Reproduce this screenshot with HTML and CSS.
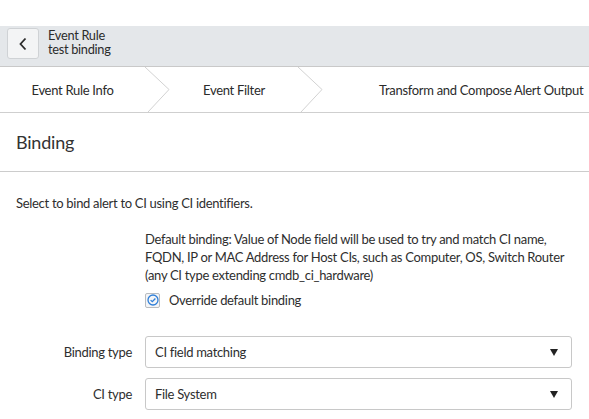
FILE: index.html
```html
<!DOCTYPE html>
<html>
<head>
<meta charset="utf-8">
<link rel="stylesheet" href="styles.css">
</head>
<body>
<div class="topspace"></div>
<header class="header">
  <button class="back" aria-label="Back">
    <svg width="10" height="14" viewBox="0 0 10 14"><path d="M7.5 1.5 L2.5 7 L7.5 12.5" fill="none" stroke="#2b2b2b" stroke-width="1.8"/></svg>
  </button>
  <div class="title">
    <div>Event Rule</div>
    <div>test binding</div>
  </div>
</header>
<nav class="tabs">
  <div class="tab tab1">Event Rule Info</div>
  <svg class="chev" width="25" height="45" viewBox="0 0 25 45"><path d="M0 0 L24 22.5 L3 45" fill="none" stroke="#d2d2d2" stroke-width="1"/></svg>
  <div class="tab tab2">Event Filter</div>
  <svg class="chev" width="25" height="45" viewBox="0 0 25 45"><path d="M0 0 L24 22.5 L3 45" fill="none" stroke="#d2d2d2" stroke-width="1"/></svg>
  <div class="tab tab3">Transform and Compose Alert Output</div>
</nav>
<section class="section-head">Binding</section>
<p class="intro">Select to bind alert to CI using CI identifiers.</p>
<div class="indent">
  <p class="desc">Default binding: Value of Node field will be used to try and match CI name, FQDN, IP or MAC Address for Host CIs, such as Computer, OS, Switch Router (any CI type extending cmdb_ci_hardware)</p>
  <label class="check">
    <span class="box"><svg width="12" height="12" viewBox="0 0 12 12"><circle cx="6" cy="6" r="5" fill="none" stroke="#2f7fd8" stroke-width="1.3"/><path d="M3.6 6.1 L5.3 7.7 L8.4 4.5" fill="none" stroke="#2f7fd8" stroke-width="1.3"/></svg></span>
    Override default binding
  </label>
</div>
<div class="form">
  <div class="row">
    <div class="label">Binding type</div>
    <div class="select"><span>CI field matching</span><span class="arrow"></span></div>
  </div>
  <div class="row">
    <div class="label">CI type</div>
    <div class="select"><span>File System</span><span class="arrow"></span></div>
  </div>
</div>
</body>
</html>
```
FILE: styles.css
```css
html, body {
  margin: 0;
  padding: 0;
  background: #fff;
}
body {
  font-family: "Lato", "Noto Sans", sans-serif;
  font-size: 13px;
  letter-spacing: -0.3px;
  color: #2e2e2e;
  width: 589px;
  overflow: hidden;
}
.topspace {
  height: 26px;
}
.header {
  height: 38px;
  padding-top: 2px;
  background: #e4e7ea;
  border-bottom: 1px solid #c9c9c9;
  display: flex;
  align-items: flex-start;
  padding-left: 7px;
}
.back {
  flex: none;
  width: 32px;
  height: 31px;
  box-sizing: border-box;
  border: 1px solid #cfd2d5;
  border-radius: 3px;
  background: #f3f4f5;
  display: flex;
  align-items: center;
  justify-content: center;
  padding: 0;
}
.title {
  margin-left: 9px;
  margin-top: 1px;
  line-height: 13.5px;
  font-size: 12.8px;
  color: #2b2b2b;
}
.tabs {
  height: 45px;
  display: flex;
  align-items: center;
  border-bottom: 1px solid #cfcfcf;
  overflow: hidden;
}
.tab {
  flex: none;
  white-space: nowrap;
  color: #2b2b2b;
}
.tab1 {
  width: 145px;
  text-align: center;
}
.tab2 {
  width: 128px;
  text-align: center;
}
.tab3 {
  padding-left: 56px;
}
.chev {
  flex: none;
  height: 45px;
}
.section-head {
  height: 58px;
  border-bottom: 1px solid #cccccc;
  display: flex;
  align-items: center;
  padding-left: 16px;
  font-size: 18px;
  letter-spacing: -0.2px;
  color: #333;
}
.intro {
  margin: 22px 0 0 16px;
  line-height: 18px;
}
.indent {
  margin-left: 145px;
  margin-right: 10px;
}
.desc {
  margin: 18px 0 0;
  line-height: 18px;
}
.check {
  display: flex;
  align-items: center;
  margin-top: 8px;
  gap: 9px;
  line-height: 16px;
}
.box {
  flex: none;
  width: 15px;
  height: 15px;
  box-sizing: border-box;
  border: 1px solid #b9bcc0;
  border-radius: 2px;
  background: #f4f5f7;
  display: flex;
  align-items: center;
  justify-content: center;
}
.form {
  margin-top: 28px;
  display: flex;
  flex-direction: column;
  gap: 10px;
}
.row {
  display: flex;
  align-items: center;
}
.label {
  width: 132px;
  text-align: right;
  padding-right: 13px;
}
.select {
  width: 427px;
  height: 32px;
  box-sizing: border-box;
  border: 1px solid #c8c8c8;
  border-radius: 3px;
  display: flex;
  align-items: center;
  justify-content: space-between;
  padding: 0 13px 0 9px;
}
.arrow {
  width: 0;
  height: 0;
  border-left: 4.5px solid transparent;
  border-right: 4.5px solid transparent;
  border-top: 7px solid #222;
}
```
